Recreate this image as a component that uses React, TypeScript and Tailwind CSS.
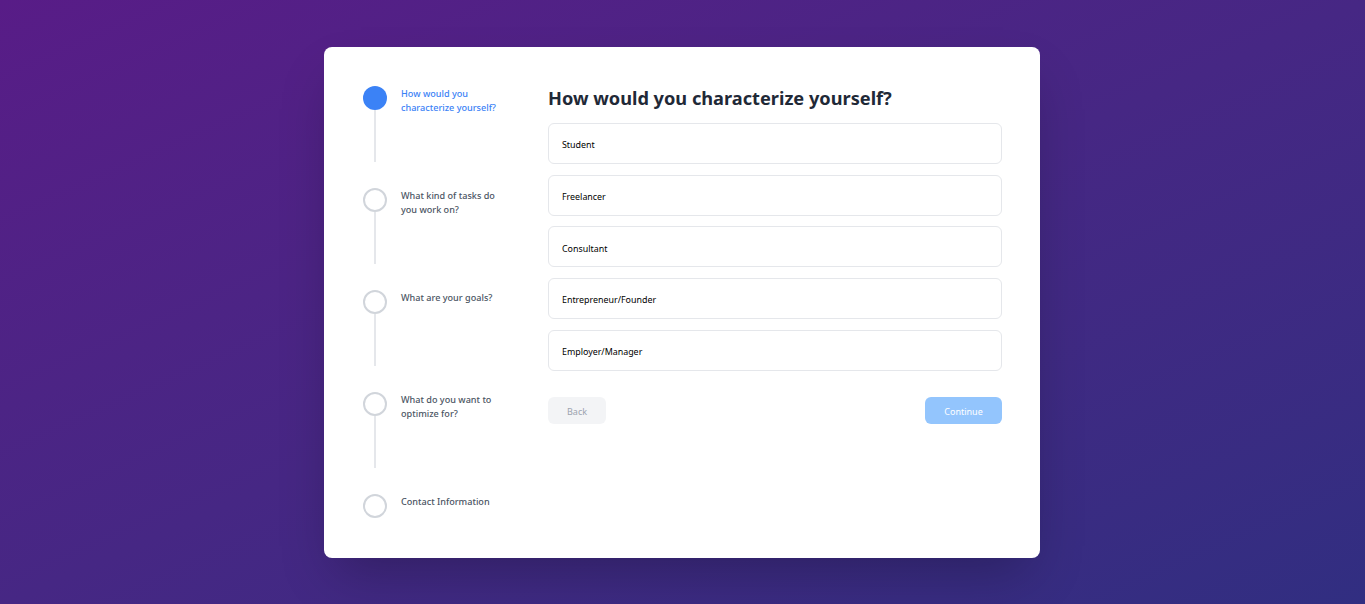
const steps = [
  "How would you characterize yourself?",
  "What kind of tasks do you work on?",
  "What are your goals?",
  "What do you want to optimize for?",
  "Contact Information",
];

const options = [
  "Student",
  "Freelancer",
  "Consultant",
  "Entrepreneur/Founder",
  "Employer/Manager",
];

export default function App() {
  const current = 0;

  return (
    <div
      className="flex h-[604px] w-full items-start justify-center bg-gradient-to-br from-[#581c87] to-[#312e81] pt-[47px]"
      style={{ fontFamily: '"Noto Sans", "Open Sans", sans-serif' }}
    >
      <div className="mr-px flex h-[511px] w-[716px] rounded-lg bg-white pt-[39px] pr-[38px] pl-[39px] shadow-2xl">
        <div className="flex w-[147px] shrink-0 flex-col">
          {steps.map((label, i) => {
            const active = i === current;
            const last = i === steps.length - 1;
            return (
              <div key={label} className={"flex " + (last ? "" : "h-[102px]")}>
                <div className="flex w-6 shrink-0 flex-col items-center">
                  {active ? (
                    <div className="h-6 w-6 rounded-full bg-[#3b82f6]" />
                  ) : (
                    <div className="h-6 w-6 rounded-full border-2 border-[#d1d5db] bg-white" />
                  )}
                  {!last && <div className="h-[52px] w-[2px] bg-[#e5e7eb]" />}
                </div>
                <div
                  className={
                    "ml-[14px] pt-[1px] text-[9.1px] leading-[14px] font-medium " +
                    (active ? "text-[#3b82f6]" : "text-[#4b5563]")
                  }
                >
                  {label}
                </div>
              </div>
            );
          })}
        </div>

        <div className="ml-[38px] flex flex-1 flex-col">
          <h1 className="mb-[13px] text-[18.2px] leading-[24px] font-bold text-[#1f2937]">
            How would you characterize yourself?
          </h1>
          <div className="flex flex-col gap-[10.7px]">
            {options.map((o) => (
              <button
                key={o}
                className="flex h-[41px] items-center rounded-md border border-[#e5e7eb] bg-white px-[13px] pt-[3px] text-left text-[8.9px] text-black"
              >
                {o}
              </button>
            ))}
          </div>
          <div className="mt-[26px] flex items-center justify-between">
            <button className="h-[27px] w-[58px] rounded-md bg-[#f3f4f6] pt-[3px] text-[9px] text-[#9ca3af]">
              Back
            </button>
            <button className="h-[27px] w-[77px] rounded-md bg-[#93c5fd] pt-[3px] text-[9px] text-white">
              Continue
            </button>
          </div>
        </div>
      </div>
    </div>
  );
}
